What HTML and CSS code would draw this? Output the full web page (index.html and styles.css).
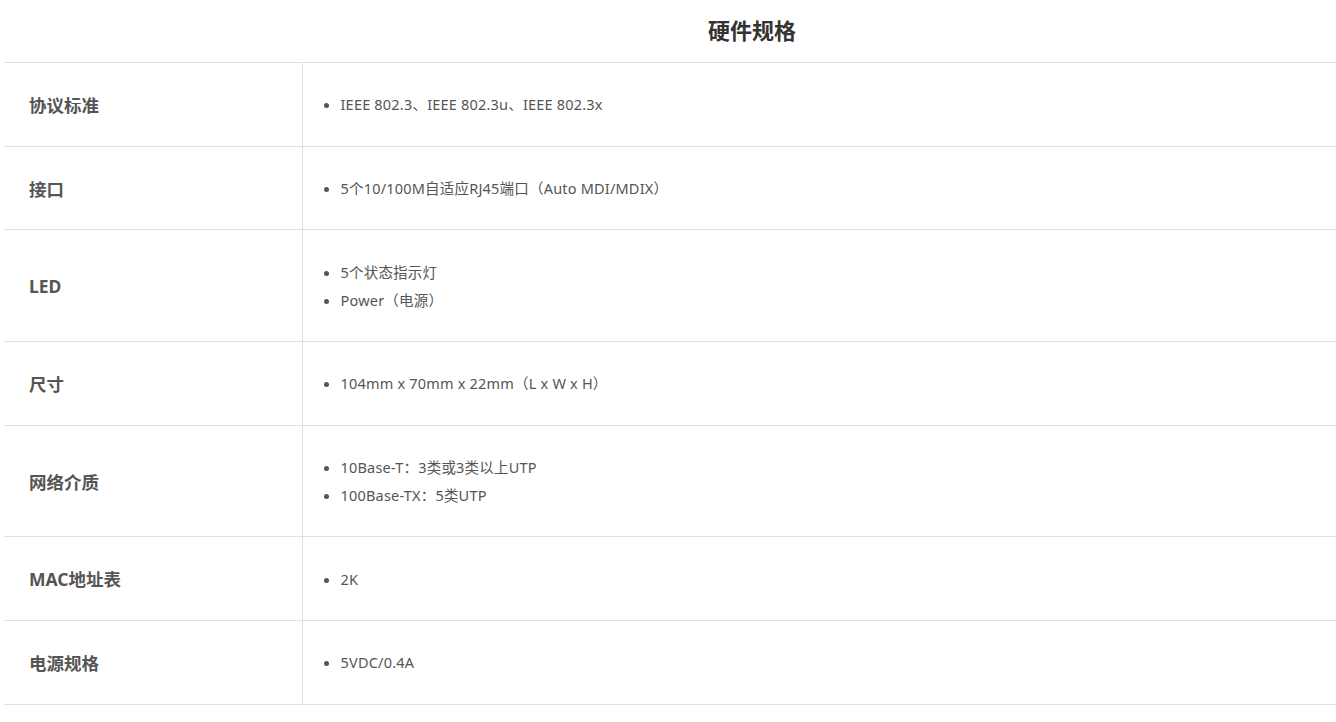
FILE: index.html
```html
<!DOCTYPE html>
<html lang="zh-CN">
<head>
  <meta charset="UTF-8">
  <title>硬件规格</title>
  <meta name="viewport" content="width=device-width, initial-scale=1">
  <link rel="stylesheet" href="styles.css">
</head>
<body>

  <!-- 硬件规格表 -->
  <div class="spec">
    <h2 class="spec-title">硬件规格</h2>
    <table class="spec-table">
      <tbody>
        <tr>
          <th>协议标准</th>
          <td><ul><li>IEEE 802.3、IEEE 802.3u、IEEE 802.3x</li></ul></td>
        </tr>
        <tr>
          <th>接口</th>
          <td><ul><li>5个10/100M自适应RJ45端口（Auto MDI/MDIX）</li></ul></td>
        </tr>
        <tr>
          <th>LED</th>
          <td><ul><li>5个状态指示灯</li><li>Power（电源）</li></ul></td>
        </tr>
        <tr>
          <th>尺寸</th>
          <td><ul><li>104mm x 70mm x 22mm（L x W x H）</li></ul></td>
        </tr>
        <tr>
          <th>网络介质</th>
          <td><ul><li>10Base-T：3类或3类以上UTP</li><li>100Base-TX：5类UTP</li></ul></td>
        </tr>
        <tr>
          <th>MAC地址表</th>
          <td><ul><li>2K</li></ul></td>
        </tr>
        <tr>
          <th>电源规格</th>
          <td><ul><li>5VDC/0.4A</li></ul></td>
        </tr>
      </tbody>
    </table>
  </div>

</body>
</html>
```

FILE: styles.css
```css
html, body {
  overflow: hidden;
}

body {
  margin: 0;
  padding: 0 0 0 4px;
  font-family: "Noto Sans", "Noto Sans CJK SC", sans-serif;
  color: #555;
  background: #fff;
}

/* 表格比窗口宽，标题按整表居中 */
.spec {
  width: 1496px;
}

.spec-title {
  margin: 0;
  height: 62px;
  line-height: 60px;
  text-align: center;
  font-size: 22px;
  font-weight: bold;
  color: #333;
}

.spec-table {
  width: 100%;
  border-collapse: collapse;
  border-top: 1px solid #e0e0e0;
}

.spec-table th,
.spec-table td {
  border-bottom: 1px solid #e0e0e0;
  vertical-align: middle;
  text-align: left;
}

.spec-table th {
  width: 298px;
  padding: 0 0 0 25px;
  font-size: 17.5px;
  font-weight: bold;
  color: #555;
  border-right: 1px solid #e0e0e0;
  box-sizing: border-box;
}

.spec-table td {
  padding: 27.35px 20px;
  font-size: 14.5px;
  letter-spacing: 0.2px;
}

.spec-table ul {
  margin: 0;
  padding-left: 18px;
}

.spec-table li {
  line-height: 28px;
}
```
